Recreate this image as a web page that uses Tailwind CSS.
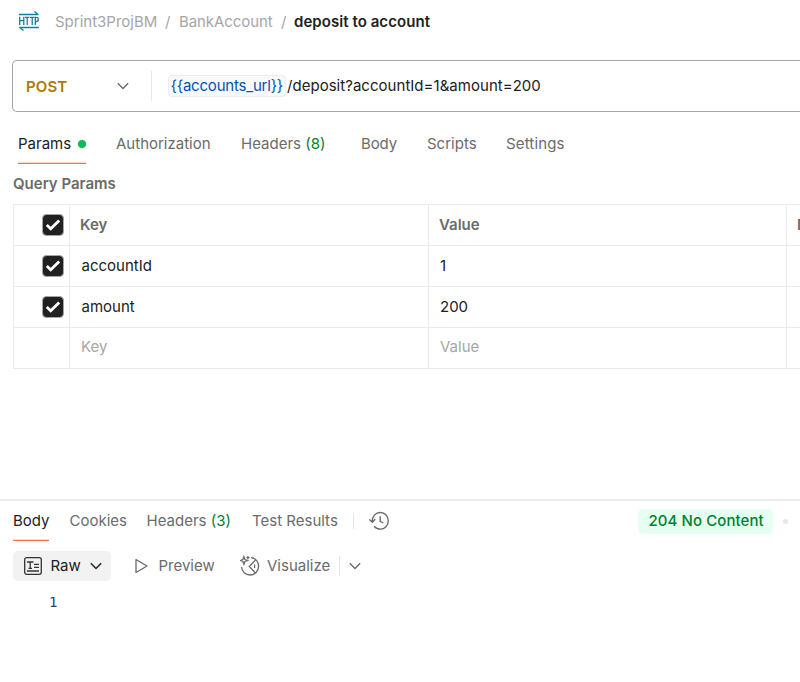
<!DOCTYPE html>
<html lang="en">
<head>
<meta charset="utf-8">
<title>deposit to account</title>
<script src="https://cdn.jsdelivr.net/npm/@tailwindcss/browser@4"></script>
</head>
<body class="bg-white">
<div class="w-[800px] h-[682px] overflow-hidden bg-white font-['Inter',sans-serif] text-[15px] leading-5 text-[#6b6b6b] whitespace-nowrap">
  <header class="flex items-center h-[60px] pb-[17px] pl-[18px]">
    <svg class="w-[22px] h-5 mr-[15px] -mt-[2px] shrink-0" viewBox="0 0 22 20" fill="none" stroke="#0c8299" stroke-width="1.3">
      <path d="M1 3.5H20.5M16.5 .5L20 3.5M1.2 16.5H20.8M1.7 16.5L5.5 19.5"/>
      <path d="M1.7 5.7V14M5.8 5.7V14M1.7 9.7H5.8M7 6.3H11.4M9.2 6.3V14M12 6.3H16.4M14.2 6.3V14M17.3 14V6.3H18.6C20.9 6.3 20.9 10.5 18.6 10.5H17.3"/>
    </svg>
    <span class="w-[111px] text-[#a6a6a6]">Sprint3ProjBM</span>
    <span class="w-[13px] -ml-px mr-px text-[#a6a6a6]">/</span>
    <span class="w-[102px] tracking-[-0.08px] text-[#a6a6a6]">BankAccount</span>
    <span class="w-[13px] text-[#a6a6a6]">/</span>
    <span class="font-semibold tracking-[0.06px] text-[#212121]">deposit to account</span>
  </header>

  <section class="flex items-center h-[52px] ml-3 border border-r-0 border-[#a6a6a6] rounded-l-[5px]">
    <span class="w-[91px] ml-[13px] pt-px font-semibold tracking-[0.1px] text-[#ad7a03]">POST</span>
    <svg class="w-3 h-3" viewBox="0 0 12 12" fill="none" stroke="#6b6b6b" stroke-width="1.4"><path d="M.8 3.3L6 8.5L11.2 3.3"/></svg>
    <div class="w-px h-[30px] ml-[22px] mr-4 bg-[#e6e6e6]"></div>
    <span class="w-[118px] h-[22px] pl-[1.5px] border border-[#ededed] rounded bg-[#f9f9f9] tracking-[-0.2px] text-[#0053b8]">{{accounts_url}}</span>
    <span class="ml-px tracking-[0.03px] text-[#212121]">/deposit?accountId=1&amp;amount=200</span>
  </section>

  <nav class="flex h-[52px] pt-[22px] pl-[18px]">
    <div class="w-[68px] mr-[30px] text-[#212121]">
      <div class="flex justify-between h-7">Params<i class="size-2 mt-[6px] rounded-full bg-[#0cbb52]"></i></div>
      <div class="h-px bg-[#ffdacd]"></div>
      <div class="h-px bg-[#ff6c37]"></div>
    </div>
    <span class="w-[125px]">Authorization</span>
    <span class="w-[120px]">Headers <span class="text-[#007f31]">(8)</span></span>
    <span class="w-[66px] tracking-[-0.1px]">Body</span>
    <span class="w-[79px]">Scripts</span>
    <span class="tracking-[0.15px]">Settings</span>
  </nav>

  <h2 class="h-10 pt-[10px] pl-[13px] font-semibold">Query Params</h2>

  <div class="ml-[13px] w-[900px] grid grid-cols-[57px_359px_358px_126px] grid-rows-[42px_41px_41px_41px] text-[#212121] *:flex *:items-center *:border-b *:border-r *:border-[#ebebeb]">
    <div class="pl-7 border-t border-l"><svg class="size-[22px]" viewBox="0 0 22 22" fill="none"><rect x=".5" y=".5" width="21" height="21" rx="4" fill="#212121" stroke="#a6a6a6"/><path d="M4.8 10.9L8.7 14.7L17.2 6.4" stroke="#fff" stroke-width="2.8"/></svg></div>
    <div class="pl-[10px] border-t font-semibold text-[#6b6b6b]">Key</div>
    <div class="pl-[10px] border-t font-semibold text-[#6b6b6b]">Value</div>
    <div class="pl-[10px] border-t font-semibold text-[#6b6b6b]">Description</div>
    <div class="pl-7 border-l"><svg class="size-[22px]" viewBox="0 0 22 22" fill="none"><rect x=".5" y=".5" width="21" height="21" rx="4" fill="#212121" stroke="#a6a6a6"/><path d="M4.8 10.9L8.7 14.7L17.2 6.4" stroke="#fff" stroke-width="2.8"/></svg></div>
    <div class="pl-[11.5px]">accountId</div>
    <div class="pl-[11px]">1</div>
    <div></div>
    <div class="pl-7 border-l"><svg class="size-[22px]" viewBox="0 0 22 22" fill="none"><rect x=".5" y=".5" width="21" height="21" rx="4" fill="#212121" stroke="#a6a6a6"/><path d="M4.8 10.9L8.7 14.7L17.2 6.4" stroke="#fff" stroke-width="2.8"/></svg></div>
    <div class="pl-[11.5px]">amount</div>
    <div class="pl-[11px]">200</div>
    <div></div>
    <div class="border-l"></div>
    <div class="pl-[11px] pb-[2px] text-[#a6a6a6]">Key</div>
    <div class="pl-[11px] pb-[2px] text-[#a6a6a6]">Value</div>
    <div></div>
  </div>

  <section class="mt-[130px] border-t-2 border-[#ededed]">
    <div class="flex h-10 pt-[10px] pl-[13px]">
      <div class="w-9 mr-[20.5px] text-[#212121]">
        <div class="h-7">Body</div>
        <div class="h-px bg-[#ffdacd]"></div>
        <div class="h-px bg-[#ff6c37]"></div>
      </div>
      <span class="w-[77px]">Cookies</span>
      <span class="w-[105.5px]">Headers <span class="text-[#007f31]">(3)</span></span>
      <span class="w-[101px]">Test Results</span>
      <div class="w-px h-[15px] mt-[3px] mr-[15px] bg-[#e6e6e6]"></div>
      <svg class="w-[22px] h-5" viewBox="0 0 22 20" fill="none" stroke="#6b6b6b" stroke-width="1.4"><path d="M3.3 10.3C3.1 5.5 6.5 1.5 11.3 1.5C16 1.5 19.3 5.2 19.3 9.8C19.3 14.4 15.8 18.1 11.3 18.1C8.7 18.1 6.7 17.1 5.2 15.2M.4 8.4L3.4 11.2L6.2 8.2M11.2 5.3V10.3L14.3 12"/></svg>
      <div class="w-[135px] h-[25px] ml-[247px] -mt-[2px] pl-[10.5px] pt-[2px] rounded-[5px] bg-[#e5fff1] font-medium tracking-[0.08px] text-[#007f31]">204 No Content</div>
      <i class="size-[5px] mt-[8px] ml-[10px] rounded-full bg-[#e6e6e6]"></i>
    </div>
    <div class="flex items-center h-[50px] pl-[13px]">
      <div class="flex items-center w-[98px] h-[30px] pl-[11px] mr-6 rounded-[5px] bg-[#f2f2f2] text-[#212121]">
        <svg class="w-[18px] h-[18px] mr-[8.5px]" viewBox="0 0 18 18" fill="none" stroke="#333" stroke-width="1.3"><rect x=".7" y=".7" width="16.6" height="16.6" rx="2"/><path d="M3 5H9.5M6.2 5V11.5M4.5 11.3H8M10 7.3H15M10 10.3H15M3 14H15"/></svg>
        <span class="w-[39.5px]">Raw</span>
        <svg class="w-3 h-3" viewBox="0 0 12 12" fill="none" stroke="#212121" stroke-width="1.5"><path d="M.8 3.3L6 8.5L11.2 3.3"/></svg>
      </div>
      <svg class="w-[13px] h-4 mr-[10.5px]" viewBox="0 0 13 16" fill="none" stroke="#6b6b6b" stroke-width="1.3" stroke-linejoin="round"><path d="M1 1.5V14.5L12 8Z"/></svg>
      <span class="w-[81.5px]">Preview</span>
      <svg class="w-5 h-[22px] mr-[7px]" viewBox="0 0 20 22" fill="none" stroke="#6b6b6b" stroke-width="1.3"><path d="M3.9 1.6L4.9 4.5L7.6 5.5L4.9 6.5L3.9 9.3L2.9 6.5L.3 5.5L2.9 4.5ZM7.9 .9V4.3M6.3 2.6H9.5M11 2.6C15.7 2.9 18.6 6.8 18.6 11.2C18.6 16.1 14.9 20 10.1 20C5.4 20 1.8 16.5 1.6 12M15.6 4.9L9.3 11.5L15.4 18M14.6 9.5V13"/></svg>
      <span class="w-[72px]">Visualize</span>
      <div class="w-px h-5 mr-[9px] bg-[#e6e6e6]"></div>
      <svg class="w-3 h-3" viewBox="0 0 12 12" fill="none" stroke="#6b6b6b" stroke-width="1.4"><path d="M.8 3.3L6 8.5L11.2 3.3"/></svg>
    </div>
    <pre class="pl-[49px] pt-px font-['DejaVu_Sans_Mono',monospace] text-[14px] leading-5 text-[#174a78]">1</pre>
  </section>
</div>
</body>
</html>
